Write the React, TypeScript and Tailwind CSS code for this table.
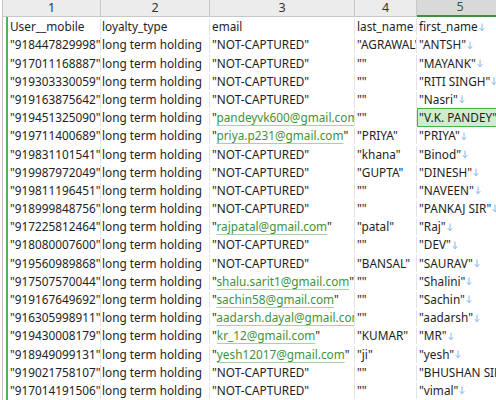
import React from "react";

type Row = {
  a: string;
  b: string;
  c: string;
  cEmail?: boolean;
  d: string;
  e: string;
  arrow?: boolean;
  selected?: boolean;
};

const rows: Row[] = [
  { a: "User__mobile", b: "loyalty_type", c: "email", d: "last_name", e: "first_name", arrow: true },
  { a: '"918447829998"', b: "long term holding", c: '"NOT-CAPTURED"', d: '"AGRAWAL"', e: '"ANTSH"', arrow: true },
  { a: '"917011168887"', b: "long term holding", c: '"NOT-CAPTURED"', d: '""', e: '"MAYANK"', arrow: true },
  { a: '"919303330059"', b: "long term holding", c: '"NOT-CAPTURED"', d: '""', e: '"RITI SINGH"', arrow: true },
  { a: '"919163875642"', b: "long term holding", c: '"NOT-CAPTURED"', d: '""', e: '"Nasri"', arrow: true },
  { a: '"919451325090"', b: "long term holding", c: "pandeyvk600@gmail.com", cEmail: true, d: '""', e: '"V.K. PANDEY"', selected: true },
  { a: '"919711400689"', b: "long term holding", c: "priya.p231@gmail.com", cEmail: true, d: '"PRIYA"', e: '"PRIYA"', arrow: true },
  { a: '"919831101541"', b: "long term holding", c: '"NOT-CAPTURED"', d: '"khana"', e: '"Binod"', arrow: true },
  { a: '"919987972049"', b: "long term holding", c: '"NOT-CAPTURED"', d: '"GUPTA"', e: '"DINESH"', arrow: true },
  { a: '"919811196451"', b: "long term holding", c: '"NOT-CAPTURED"', d: '""', e: '"NAVEEN"', arrow: true },
  { a: '"918999848756"', b: "long term holding", c: '"NOT-CAPTURED"', d: '""', e: '"PANKAJ SIR"', arrow: true },
  { a: '"917225812464"', b: "long term holding", c: "rajpatal@gmail.com", cEmail: true, d: '"patal"', e: '"Raj"', arrow: true },
  { a: '"918080007600"', b: "long term holding", c: '"NOT-CAPTURED"', d: '""', e: '"DEV"', arrow: true },
  { a: '"919560989868"', b: "long term holding", c: '"NOT-CAPTURED"', d: '"BANSAL"', e: '"SAURAV"', arrow: true },
  { a: '"917507570044"', b: "long term holding", c: "shalu.sarit1@gmail.com", cEmail: true, d: '""', e: '"Shalini"', arrow: true },
  { a: '"919167649692"', b: "long term holding", c: "sachin58@gmail.com", cEmail: true, d: '""', e: '"Sachin"', arrow: true },
  { a: '"916305998911"', b: "long term holding", c: "aadarsh.dayal@gmail.com", cEmail: true, d: '""', e: '"aadarsh"', arrow: true },
  { a: '"919430008179"', b: "long term holding", c: "kr_12@gmail.com", cEmail: true, d: '"KUMAR"', e: '"MR"', arrow: true },
  { a: '"918949099131"', b: "long term holding", c: "yesh12017@gmail.com", cEmail: true, d: '"ji"', e: '"yesh"', arrow: true },
  { a: '"919021758107"', b: "long term holding", c: '"NOT-CAPTURED"', d: '""', e: '"BHUSHAN SIR"', arrow: true },
  { a: '"917014191506"', b: "long term holding", c: '"NOT-CAPTURED"', d: '""', e: '"vimal"', arrow: true },
];

function Arrow() {
  return (
    <svg width="6" height="9" viewBox="0 0 6 9" className="ml-[1px] shrink-0" aria-hidden>
      <path d="M3 0.5 V7.5" stroke="#86b6e6" strokeWidth="1" />
      <path d="M0.8 5.2 L3 7.8 L5.2 5.2" stroke="#86b6e6" strokeWidth="1" fill="none" />
    </svg>
  );
}

export default function App() {
  return (
    <div
      className="w-[496px] h-[400px] overflow-hidden bg-white text-[#1e1e1e] text-[11.8px] leading-none"
      style={{ fontFamily: '"Noto Sans", "Open Sans", sans-serif' }}
    >
      <div className="flex h-full">
        <div className="w-[2px] shrink-0 bg-white" />
        <div className="w-[1px] shrink-0 bg-[#c4c4c4]" />
        <div className="flex-1 flex flex-col min-w-0">
          <div className="flex h-[17px] shrink-0 text-[#333] text-[12.5px]">
            <div className="w-[98px] shrink-0 bg-[#ececec] border-b border-r border-[#c8c8c8] flex items-center justify-center">1</div>
            <div className="w-[109px] shrink-0 bg-[#ececec] border-b border-r border-[#c8c8c8] flex items-center justify-center">2</div>
            <div className="w-[145px] shrink-0 bg-[#ececec] border-b border-r border-[#c8c8c8] flex items-center justify-center">3</div>
            <div className="w-[62px] shrink-0 bg-[#ececec] border-b border-r border-[#c8c8c8] flex items-center justify-center">4</div>
            <div className="w-[86px] shrink-0 bg-[#d9d9d9] border-b-2 border-[#3f8f3f] flex items-center justify-center text-[#2f5f2f]">5</div>
          </div>
          <div className="flex flex-1">
            <div className="w-[3px] shrink-0" />
            <div className="w-[2px] shrink-0 bg-[#4cb84c]" />
            <div className="flex-1 flex flex-col min-w-0">
              {rows.map((r, i) => (
                <div key={i} className="flex h-[18.2px] shrink-0 items-center whitespace-nowrap pt-[2px]">
                  <div className="w-[93px] shrink-0 h-full border-r border-[#e3e3e3] pl-[2px] flex items-center overflow-hidden">
                    {r.a}
                  </div>
                  <div className="w-[109px] shrink-0 h-full border-r border-[#e3e3e3] pl-[1px] flex items-center overflow-hidden">
                    {r.b}
                  </div>
                  <div className="w-[145px] shrink-0 h-full border-r border-[#e3e3e3] pl-[2px] flex items-center overflow-hidden">
                    {r.cEmail ? (
                      <span>
                        "
                        <span className="text-[#3f9239] underline decoration-[#a3d69f] underline-offset-[3px]">{r.c}</span>
                        "
                      </span>
                    ) : (
                      r.c
                    )}
                  </div>
                  <div className="w-[62px] shrink-0 h-full border-r border-[#e3e3e3] pl-[2px] flex items-center overflow-hidden">
                    {r.d}
                  </div>
                  {r.selected ? (
                    <div className="w-[100px] shrink-0 h-[19px] -mt-[2px] bg-[#cdeecd] border border-[#4cae4c] pl-[1px] pt-[2px] flex items-center">
                      {r.e}
                    </div>
                  ) : (
                    <div className="w-[100px] shrink-0 h-full pl-[2px] flex items-center">
                      {r.e}
                      {r.arrow && <Arrow />}
                    </div>
                  )}
                </div>
              ))}
            </div>
          </div>
        </div>
      </div>
    </div>
  );
}
